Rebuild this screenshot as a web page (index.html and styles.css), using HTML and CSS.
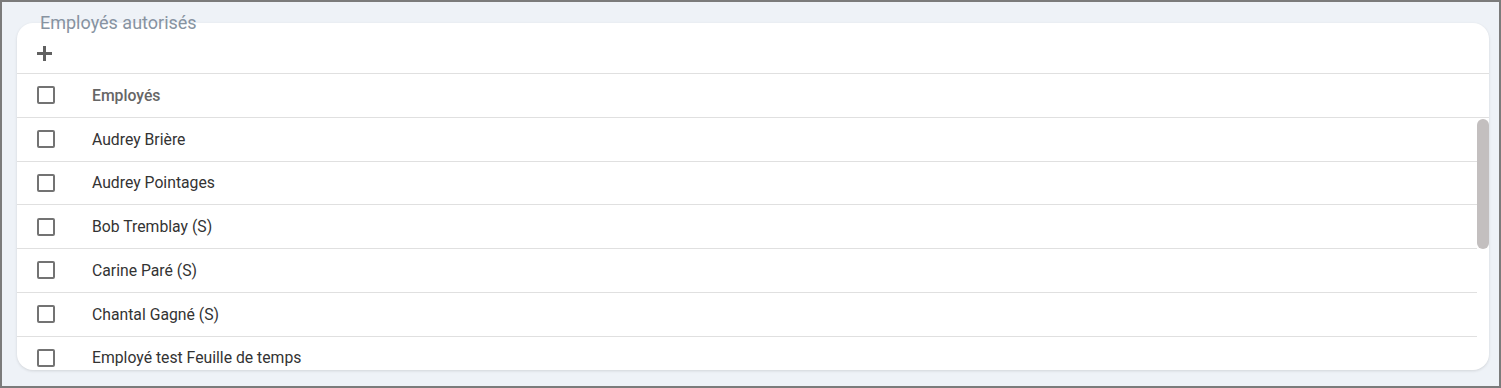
FILE: index.html
```html
<!DOCTYPE html>
<html lang="fr">
<head>
<meta charset="utf-8">
<link rel="stylesheet" href="styles.css">
</head>
<body>
<div class="frame">
  <div class="title">Employés autorisés</div>
  <div class="card">
    <div class="toolbar">
      <svg class="plus" width="15" height="15" viewBox="0 0 15 15"><path d="M6 0h3v6h6v3H9v6H6V9H0V6h6z" fill="#616161"/></svg>
    </div>
    <div class="row head">
      <span class="cb"></span><span class="label">Employés</span>
    </div>
    <div class="scroll">
      <div class="row"><span class="cb"></span><span class="label">Audrey Brière</span></div>
      <div class="row"><span class="cb"></span><span class="label">Audrey Pointages</span></div>
      <div class="row"><span class="cb"></span><span class="label">Bob Tremblay (S)</span></div>
      <div class="row"><span class="cb"></span><span class="label">Carine Paré (S)</span></div>
      <div class="row"><span class="cb"></span><span class="label">Chantal Gagné (S)</span></div>
      <div class="row"><span class="cb"></span><span class="label">Employé test Feuille de temps</span></div>
      <div class="thumb"></div>
    </div>
  </div>
</div>
</body>
</html>
```
FILE: styles.css
```css
html, body { margin: 0; padding: 0; }
body { font-family: Roboto, "Liberation Sans", Arial, sans-serif; }
.frame {
  box-sizing: border-box;
  width: 1501px;
  height: 388px;
  border: 2px solid #7b7b7b;
  background: #eef2f7;
  padding: 10px 10px 0 15px;
  display: flex;
  flex-direction: column;
}
.title {
  font-size: 18px;
  line-height: 22px;
  color: #8793a1;
  padding-left: 23px;
  margin-bottom: -11px;
  position: relative;
  z-index: 1;
}
.card {
  width: 1472px;
  height: 347px;
  background: #fff;
  border-radius: 16px;
  box-shadow: 0 1px 3px rgba(0,0,0,0.12);
  overflow: hidden;
  display: flex;
  flex-direction: column;
}
.toolbar {
  height: 51px;
  flex: none;
  box-sizing: border-box;
  padding: 23px 0 0 20px;
  border-bottom: 1px solid #e0e0e0;
}
.plus { display: block; }
.row {
  height: 42.75px;
  flex: none;
  display: flex;
  align-items: center;
  border-bottom: 1px solid #e0e0e0;
  padding-left: 20px;
  font-size: 15.75px;
  color: #333;
}
.row.head { color: #666; font-weight: 500; }
.cb {
  box-sizing: border-box;
  width: 18px;
  height: 18px;
  border: 2px solid #737373;
  border-radius: 2px;
  flex: none;
}
.label { margin-left: 37px; }
.scroll {
  flex: 1;
  min-height: 0;
  overflow: hidden;
  position: relative;
  padding-right: 12px;
  display: flex;
  flex-direction: column;
}
.thumb {
  position: absolute;
  right: 0;
  top: 1px;
  width: 12px;
  height: 130px;
  background: #c3bfbf;
  border-radius: 6px;
}
```
